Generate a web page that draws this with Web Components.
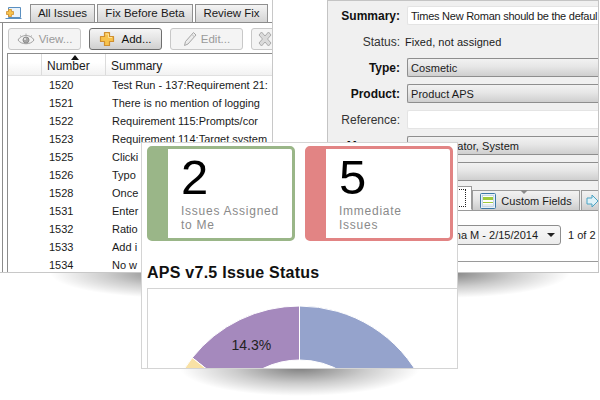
<!DOCTYPE html>
<html>
<head>
<meta charset="utf-8">
<title>APS</title>
<style>
  html, body { margin: 0; height: 100%; background: #fff; overflow: hidden; }
  .desk { position: relative; width: 600px; height: 400px; overflow: hidden; }
  .shadow { position: absolute; background: radial-gradient(ellipse closest-side, rgba(0,0,0,.5), rgba(0,0,0,.2) 55%, rgba(0,0,0,0)); }
  issues-window { position: absolute; left: 0; top: 0; }
  detail-window { position: absolute; left: 327px; top: 0; }
  dash-panel { position: absolute; left: 141px; top: 142px; }
</style>
</head>
<body>
<div class="desk">
  <div class="shadow" style="left:50px;top:248px;width:250px;height:50px"></div>
  <div class="shadow" style="left:320px;top:248px;width:250px;height:50px"></div>
  <div class="shadow" style="left:180px;top:340px;width:240px;height:56px"></div>
  <issues-window></issues-window>
  <detail-window></detail-window>
  <dash-panel>
    <stat-card slot="cards" color="#9ab688" count="2">Issues Assigned<br>to Me</stat-card>
    <stat-card slot="cards" color="#e28484" count="5">Immediate<br>Issues</stat-card>
  </dash-panel>
</div>

<script>
'use strict';

const UI_FONT = '"Liberation Sans", Arial, sans-serif';

const ICONS = {
  plus: `<svg width="16" height="16" viewBox="0 0 16 16"><path d="M5.5 1.5h5v4h4v5h-4v4h-5v-4h-4v-5h4z" fill="#f7c24c" stroke="#cf8f30" stroke-linejoin="round" stroke-width="1.2"/><path d="M6.5 3h3v3.500h3.500" fill="none" stroke="#fde39a"/></svg>`,
  eye: `<svg width="18" height="13" viewBox="0 0 18 13"><path d="M1 7c3-6 13-6 16 0-3 5-13 5-16 0z" fill="#f2f2f2" stroke="#a2a2a2"/><path d="M3 2.500L5 4M9 .5v2M15 2.500L13 4" stroke="#b0b0b0"/><circle cx="9" cy="7" r="3" fill="#a8a8a8" stroke="#8e8e8e"/><circle cx="8" cy="6" r="1" fill="#eee"/></svg>`,
  pencil: `<svg width="14" height="16" viewBox="0 0 14 16"><path d="M10.500 1.500l2.500 2.500-8 9-3.500 1.500 1-4z" fill="#ececec" stroke="#a6a6a6"/><path d="M9 3.500l2.500 2.500" stroke="#bdbdbd"/></svg>`,
  cross: `<svg width="16" height="16" viewBox="0 0 16 16"><path d="M2 4l2.500-3L8 5l3.500-4L14 4l-3.500 4 3.500 4-2.500 3L8 11l-3.500 4L2 12l3.500-4z" fill="#dadada" stroke="#ababab" stroke-linejoin="round"/></svg>`,
  grid: `<svg width="16" height="16" viewBox="0 0 16 16"><rect x=".5" y=".5" width="15" height="15" rx="1" fill="#e8f1f8" stroke="#3c78a6"/><rect x="2.500" y="2.500" width="11" height="11" fill="#fff" stroke="#a9c4d8" stroke-width=".6"/><rect x="3" y="4" width="10" height="3" fill="#9fca3c"/><path d="M3 9.500h10" stroke="#9fca3c"/><path d="M3 12h10" stroke="#c8d7e2"/></svg>`,
  laptop: `<svg width="17" height="13" viewBox="0 0 17 13"><path d="M3.500.5h12v10h-12z" fill="#eaf3fb" stroke="#5a8fc0"/><path d="M.5 11.500h16" stroke="#5a8fc0"/><path d="M3.500 2.500h3v2h2v3h-2v2h-3v-2h-2v-3h2z" fill="#f7c24c" stroke="#cf8f30" stroke-width=".8"/></svg>`,
  tabNext: `<svg width="14" height="16" viewBox="0 0 14 16"><path d="M2 5h5V2l6 6-6 6v-3H2z" fill="#dff1f7" stroke="#4aa3c4"/></svg>`,
};

function define(name, html, init) {
  const template = document.createElement('template');
  template.innerHTML = html;
  customElements.define(name, class extends HTMLElement {
    constructor() {
      super();
      this.attachShadow({ mode: 'open' });
      this.shadowRoot.appendChild(template.content.cloneNode(true));
    }
    connectedCallback() {
      if (init) init(this, this.shadowRoot);
    }
  });
}

const ISSUES = [
  ['1520', 'Test Run - 137:Requirement 21:'],
  ['1521', 'There is no mention of logging'],
  ['1522', 'Requirement 115:Prompts/cor'],
  ['1523', 'Requirement 114:Target system'],
  ['1525', 'Clicki'],
  ['1526', 'Typo'],
  ['1528', 'Once'],
  ['1531', 'Enter'],
  ['1532', 'Ratio'],
  ['1533', 'Add i'],
  ['1534', 'No w'],
];

define('issues-window', `
  <style>
    :host {
      display: flex;
      flex-direction: column;
      box-sizing: border-box;
      width: 273px;
      height: 273px;
      background: #fff;
      border-right: 1px solid #c8c8c8;
      border-bottom: 1px solid #c8c8c8;
      font: 11px/14px ${UI_FONT};
      color: #1a1a1a;
      overflow: hidden;
    }
    .tabs {
      display: flex;
      align-items: flex-end;
      gap: 2px;
      height: 23px;
      flex: none;
      padding-left: 5px;
      box-sizing: border-box;
      border-bottom: 1px solid #8c8c8c;
    }
    .tabs .ic { align-self: center; margin: 4px 6px 0 0; display: flex; }
    .tab {
      box-sizing: border-box;
      height: 18px;
      border: 1px solid #8f8f8f;
      border-bottom: 0;
      background: linear-gradient(#f4f4f4, #e2e2e2 55%, #d4d4d4);
      text-align: center;
      line-height: 17px;
      font-size: 11.5px;
    }
    .body {
      flex: 1;
      display: flex;
      flex-direction: column;
      margin-left: 2px;
      border-left: 1px solid #8c8c8c;
      min-height: 0;
    }
    .bar {
      display: flex;
      gap: 8px;
      height: 30px;
      flex: none;
      padding: 5px 0 0 5px;
      box-sizing: border-box;
    }
    .btn {
      flex: none;
      box-sizing: border-box;
      width: 73px;
      height: 22px;
      display: flex;
      align-items: center;
      justify-content: center;
      gap: 4px;
      border: 1px solid #c8c8c8;
      border-radius: 3px;
      background: #f4f4f4;
      color: #9a9a9a;
      font-size: 11.5px;
    }
    .btn.on {
      border-color: #6e6e6e;
      color: #111;
      gap: 6px;
      background: linear-gradient(#f5f5f5, #e4e4e4 50%, #cfcfcf);
    }
    .btn.tool { justify-content: flex-start; padding-left: 5px; }
    .table {
      position: relative;
      flex: 1;
      margin-left: 4px;
      border-left: 1px solid #8c8c8c;
      border-top: 1px solid #8c8c8c;
      min-height: 0;
    }
    .head {
      display: grid;
      grid-template-columns: 34px 64px 1fr;
      height: 22px;
      font-size: 12px;
      background: linear-gradient(#fff, #fff 40%, #f2f2f2);
      border-bottom: 1px solid #e0e0e0;
      box-sizing: border-box;
    }
    .head span { border-right: 1px solid #dcdcdc; padding: 5px 0 0 5px; white-space: nowrap; }
    .head span:last-child { border-right: 0; }
    .arrow {
      position: absolute;
      left: 63px;
      top: 1px;
      border: 4px solid transparent;
      border-top: 0;
      border-bottom: 5px solid #111;
    }
    .row {
      display: grid;
      grid-template-columns: 41px 63px 1fr;
      height: 18px;
      line-height: 18px;
      white-space: nowrap;
    }
  </style>
  <div class="tabs">
    <span class="ic">${ICONS.laptop}</span>
    <span class="tab" style="width:65px">All Issues</span>
    <span class="tab" style="width:96px">Fix Before Beta</span>
    <span class="tab" style="width:73px">Review Fix</span>
  </div>
  <div class="body">
    <div class="bar">
      <span class="btn">${ICONS.eye}View...</span>
      <span class="btn on">${ICONS.plus}Add...</span>
      <span class="btn">${ICONS.pencil}Edit...</span>
      <span class="btn tool">${ICONS.cross}</span>
    </div>
    <div class="table">
      <i class="arrow"></i>
      <div class="head"><span></span><span>Number</span><span>Summary</span></div>
      <div class="rows"></div>
    </div>
  </div>
`, (host, root) => {
  const rows = root.querySelector('.rows');
  if (rows.children.length) return;
  for (const [num, text] of ISSUES) {
    const row = document.createElement('div');
    row.className = 'row';
    row.innerHTML = `<span></span><span></span><span></span>`;
    row.children[1].textContent = num;
    row.children[2].textContent = text;
    rows.appendChild(row);
  }
});

define('detail-window', `
  <style>
    :host {
      display: flex;
      flex-direction: column;
      box-sizing: border-box;
      width: 272px;
      height: 273px;
      background: #f0f0f0;
      border: 1px solid #c4c4c4;
      font: 11px/14px ${UI_FONT};
      color: #1a1a1a;
      overflow: hidden;
    }
    .form {
      display: grid;
      grid-template-columns: 72px 1fr;
      column-gap: 7px;
      grid-auto-rows: 19px;
      row-gap: 7px;
      padding-top: 5px;
      flex: none;
    }
    .form label { text-align: right; font-size: 12px; line-height: 20px; color: #333; white-space: nowrap; }
    .form label.req { font-weight: bold; color: #111; }
    .field {
      box-sizing: border-box;
      padding-left: 3px;
      line-height: 18px;
      letter-spacing: .05px;
      white-space: nowrap;
      overflow: hidden;
    }
    .plain { line-height: 20px; padding-left: 0; margin-left: -2px; overflow: visible; }
    .input { background: #fff; border: 1px solid #e4e4e4; border-right: 0; border-radius: 2px 0 0 2px; letter-spacing: -.25px; }
    .select {
      border: 1px solid #8e8e8e;
      border-right: 0;
      border-radius: 2px 0 0 2px;
      background: linear-gradient(#f2f2f2, #e6e6e6 45%, #cfcfcf);
    }
    .tabs {
      display: flex;
      align-items: flex-end;
      height: 24px;
      margin-top: 6px;
      padding-left: 124px;
      border-bottom: 1px solid #9a9a9a;
      box-sizing: border-box;
      flex: none;
    }
    .tab {
      position: relative;
      box-sizing: border-box;
      flex: none;
      width: 108px;
      height: 20px;
      margin-right: 1px;
      display: flex;
      align-items: center;
      justify-content: center;
      gap: 5px;
      border: 1px solid #9a9a9a;
      border-bottom: 0;
      background: linear-gradient(#f2f2f2, #e4e4e4 50%, #cccccc);
      white-space: nowrap;
    }
    .tab.sel {
      width: 20px;
      height: 24px;
      margin-right: 0;
      background: #fff;
      border-bottom: 1px solid #fff;
      padding: 2px 5px 2px 0;
    }
    .tab.sel i { flex: 1; align-self: stretch; border: 1px dotted #222; }
    .tab .notch {
      position: absolute;
      left: 47px;
      top: -1px;
      border: 4px solid transparent;
      border-bottom: 0;
      border-top: 4px solid #8a8a8a;
    }
    .pane {
      flex: 1;
      background: #fff;
      min-height: 0;
      display: flex;
      flex-direction: column;
    }
    .pager {
      display: flex;
      align-items: center;
      height: 20px;
      margin-top: 14px;
      padding-left: 102px;
      flex: none;
    }
    .combo {
      box-sizing: border-box;
      flex: none;
      width: 131px;
      height: 20px;
      display: flex;
      align-items: center;
      justify-content: flex-end;
      gap: 9px;
      padding-right: 5px;
      border: 1px solid #8e8e8e;
      border-radius: 3px;
      background: linear-gradient(#f8f8f8, #ececec);
      white-space: nowrap;
    }
    .combo i { border: 4px solid transparent; border-bottom: 0; border-top: 4px solid #222; }
    .count { margin-left: 7px; white-space: nowrap; }
    .rule { margin-top: 16px; border-top: 1px solid #9a9a9a; }
  </style>
  <div class="form">
    <label class="req">Summary:</label><div class="field input">Times New Roman should be the defaul</div>
    <label>Status:</label><div class="field plain">Fixed, not assigned</div>
    <label class="req">Type:</label><div class="field select">Cosmetic</div>
    <label class="req">Product:</label><div class="field select">Product APS</div>
    <label>Reference:</label><div class="field input"></div>
    <label class="req">Manager:</label><div class="field select">Administrator, System</div>
    <label></label><div class="field select">3.0</div>
  </div>
  <div class="tabs">
    <span class="tab sel"><i></i></span>
    <span class="tab"><i class="notch"></i>${ICONS.grid}Custom Fields</span>
    <span class="tab" style="justify-content:flex-start;padding-left:3px">${ICONS.tabNext}</span>
  </div>
  <div class="pane">
    <div class="pager">
      <span class="combo">na M - 2/15/2014<i></i></span>
      <span class="count">1 of 2</span>
    </div>
    <div class="rule"></div>
  </div>
`);

define('stat-card', `
  <style>
    :host {
      display: flex;
      box-sizing: border-box;
      width: 148px;
      height: 95px;
      border: 3px solid var(--c);
      border-radius: 5px;
      background: #fff;
      font-family: "Liberation Sans", Arial, sans-serif;
    }
    .band { width: 18px; flex: none; background: var(--c); }
    .text { padding: 1px 0 0 13px; }
    .num { font-size: 49px; line-height: 54px; color: #000; }
    .cap { font-size: 12px; line-height: 14px; letter-spacing: .75px; color: #8a8a8a; white-space: nowrap; }
  </style>
  <div class="band"></div>
  <div class="text">
    <div class="num"></div>
    <div class="cap"><slot></slot></div>
  </div>
`, (host, root) => {
  host.style.setProperty('--c', host.getAttribute('color'));
  root.querySelector('.num').textContent = host.getAttribute('count');
});

// donut wedges, centre in frame coordinates, outer r 137, inner r 83
function wedge(a0, a1, fill) {
  const R = 137, r = 83, cx = 151.5, cy = 154;
  const p = (rad, a) => {
    const t = (a - 90) * Math.PI / 180;
    return `${(cx + rad * Math.cos(t)).toFixed(2)} ${(cy + rad * Math.sin(t)).toFixed(2)}`;
  };
  return `<path d="M${p(R, a0)}A${R} ${R} 0 0 1 ${p(R, a1)}L${p(r, a1)}A${r} ${r} 0 0 0 ${p(r, a0)}Z" fill="${fill}" stroke="#fff" stroke-width="1"/>`;
}

define('dash-panel', `
  <style>
    :host {
      display: flex;
      flex-direction: column;
      box-sizing: border-box;
      width: 317px;
      height: 227px;
      padding: 3px 0 0 5px;
      background: #fff;
      border: 1px solid #d4d4d4;
      font-family: "Liberation Sans", Arial, sans-serif;
      overflow: hidden;
    }
    .cards { display: flex; gap: 10px; flex: none; }
    h2 {
      margin: 23px 0 0;
      font-size: 16px;
      line-height: 18px;
      font-weight: bold;
      letter-spacing: .25px;
      color: #111;
      flex: none;
    }
    .frame {
      position: relative;
      flex: 1;
      margin-top: 6px;
      border: 1px solid #d4d4d4;
      border-right: 0;
      border-bottom: 0;
      min-height: 0;
    }
    svg { display: block; }
    text { font: 14px "Liberation Sans", Arial, sans-serif; fill: #222; }
  </style>
  <div class="cards"><slot name="cards"></slot></div>
  <h2>APS v7.5 Issue Status</h2>
  <div class="frame"><svg width="310" height="80" viewBox="0 0 310 80"></svg></div>
`, (host, root) => {
  root.querySelector('svg').innerHTML =
    wedge(0, 64, '#95a3cc') +
    wedge(-51.5, 0, '#a589bd') +
    wedge(-64, -51.5, '#f9e1a5') +
    '<text x="103.3" y="60.5" text-anchor="middle">14.3%</text>';
});
</script>
</body>
</html>
